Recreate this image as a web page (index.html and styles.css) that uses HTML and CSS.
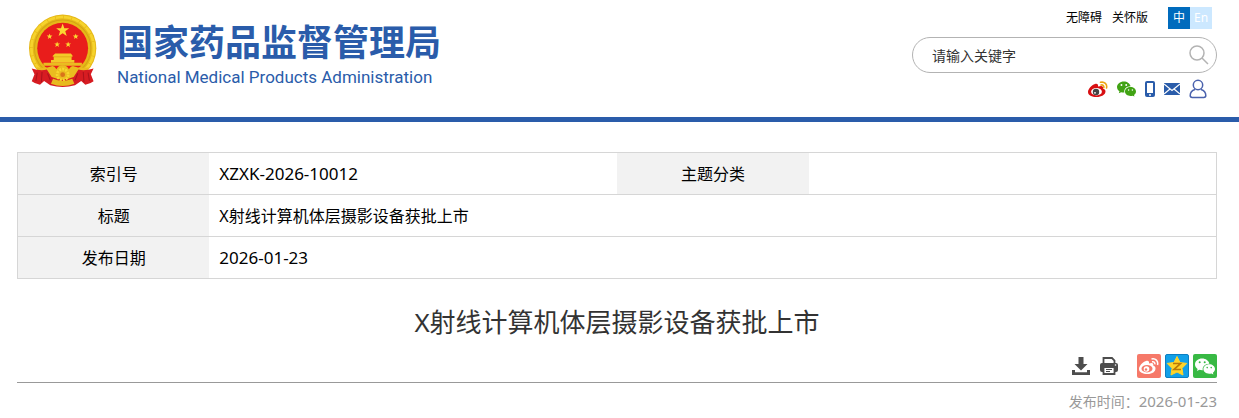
FILE: index.html
```html
<!DOCTYPE html>
<html lang="zh-CN">
<head>
    <meta charset="UTF-8">
    <meta name="viewport" content="width=device-width, initial-scale=1.0">
    <title>X射线计算机体层摄影设备获批上市</title>
    <link rel="stylesheet" href="styles.css">
</head>
<body>
    <!-- 图标定义 -->
    <svg class="icon-defs" aria-hidden="true">
        <symbol id="star" viewBox="-10 -10 20 20">
            <path d="M0-10 2.4-3.2 9.5-3.1 3.8 1.2 5.9 8.1 0 4-5.9 8.1-3.8 1.2-9.5-3.1-2.4-3.2z"/>
        </symbol>
        <symbol id="wechat" viewBox="0 0 20 16">
            <path fill-rule="evenodd" d="M7.2 0C3.2 0 0 2.6 0 5.9c0 1.8 1 3.4 2.6 4.5l-.7 2.2 2.5-1.3c.9.3 1.8.4 2.8.4h.6c-.8-3.6 2.4-6.7 6.6-6.5C13.7 2.2 10.7 0 7.2 0zM4.7 2.8a1 1 0 1 1 0 2 1 1 0 0 1 0-2zm5 0a1 1 0 1 1 0 2 1 1 0 0 1 0-2z"/>
            <path fill-rule="evenodd" d="M14.2 5.8c3.2 0 5.8 2.1 5.8 4.8 0 1.5-.8 2.8-2.1 3.7l.5 1.7-2-1c-.7.2-1.400.3-2.200.3-3.200 0-5.800-2.100-5.800-4.700s2.600-4.800 5.800-4.800zm-2 2.500a.8.8 0 1 0 0 1.600.8.8 0 0 0 0-1.600zm4 0a.8.8 0 1 0 0 1.600.8.8 0 0 0 0-1.600z"/>
        </symbol>
    </svg>

    <header class="header">
        <div class="container header-inner">
            <a href="#" class="logo">
                <svg class="emblem" viewBox="0 0 198 214" aria-hidden="true">
                    <!-- 麦穗外环 -->
                    <circle cx="98" cy="99" r="98" fill="#e6b818"/>
                    <circle cx="98" cy="99" r="91" fill="none" stroke="#f6d32c" stroke-width="8" stroke-dasharray="22 2"/>
                    <circle cx="98" cy="99" r="82" fill="none" stroke="#d3a514" stroke-width="3"/>
                    <circle cx="98" cy="99" r="74" fill="#e91d1b"/>
                    <!-- 五星 -->
                    <g fill="#fbd831">
                        <use href="#star" x="78" y="27" width="40" height="40"/>
                        <use href="#star" x="51" y="56" width="18" height="18"/>
                        <use href="#star" x="127" y="56" width="18" height="18"/>
                        <use href="#star" x="73" y="79" width="18" height="18"/>
                        <use href="#star" x="105" y="79" width="18" height="18"/>
                    </g>
                    <!-- 天安门 -->
                    <path d="M76 114h46l6 8-4 2v9h8v8H64v-8h8v-9l-4-2z" fill="#f3c928"/>
                    <path d="M72 124h52" stroke="#d99c12" stroke-width="2"/>
                    <path d="M42 141h112v9H42z" fill="#eabc20"/>
                    <!-- 绶带与齿轮 -->
                    <path d="M22 154q26 4 42-2 8-4 16 8a20 20 0 0 1 36 0q8-12 16-8 16 6 42 2l-20 34q-56 20-112 0z" fill="#eabc20"/>
                    <path d="M8 158q26 8 44 3l14 22q32 14 64 0l14-22q18 5 44-3l-8 17 8 20q-10 8-24 10l-12-11-18 13q-36 10-72 0l-18-13-12 11q-14-2-24-10l8-20z" fill="#d71c22"/>
                    <circle cx="98" cy="176" r="14" fill="#eabc20"/>
                    <circle cx="98" cy="176" r="16" fill="none" stroke="#f8d62e" stroke-width="8" stroke-dasharray="6 3"/>
                    <circle cx="98" cy="176" r="7" fill="#d9731a"/>
                    <path d="M70 188q28 12 56 0l6 14q-34 14-68 0z" fill="#e8ba1e"/>
                    <path d="M24 170l-4 24M38 168l-2 30M172 170l4 24M158 168l2 30M54 172l8 20M142 172l-8 20" fill="none" stroke="#ad121c" stroke-width="3"/>
                </svg>
                <span class="logo-text">
                    <span class="logo-cn">国家药品监督管理局</span>
                    <span class="logo-en">National Medical Products Administration</span>
                </span>
            </a>

            <div class="header-tools">
                <div class="top-links">
                    <a href="#">无障碍</a>
                    <a href="#">关怀版</a>
                    <span class="lang">
                        <a href="#" class="lang-item active">中</a><a href="#" class="lang-item">En</a>
                    </span>
                </div>
                <form class="search">
                    <input type="text" class="search-input" placeholder="请输入关键字" aria-label="请输入关键字">
                    <button type="button" class="search-btn" aria-label="搜索">
                        <svg width="20" height="20" viewBox="0 0 20 20" fill="none" stroke="#b3b3b3" stroke-width="1.5">
                            <circle cx="8" cy="8" r="7"/>
                            <path d="M13 13l6 6"/>
                        </svg>
                    </button>
                </form>
                <div class="social">
                    <a href="#" aria-label="微博">
                        <svg width="20" height="18" viewBox="0 0 20 18">
                            <path d="M7 4C3.5 5 0 9 0 12c0 3.4 4 5 8.5 5 5 0 9-2.500 9-5.500 0-1.700-1.300-2.600-2.600-3 .7-2.200-.9-3.400-4.900-1.900C10.400 4.300 9.300 3.400 7 4z" fill="#d80f12"/>
                            <ellipse cx="8.5" cy="11.7" rx="5.4" ry="3.700" fill="#fff"/>
                            <circle cx="8" cy="12" r="3.200" fill="#444"/>
                            <circle cx="7" cy="12.800" r=".9" fill="#fff"/>
                            <path d="M12.500 2.300c4-1 7 2 6 5.700M13 5c2-.4 3.200.9 2.800 2.600" fill="none" stroke="#eda516" stroke-width="1.600" stroke-linecap="round"/>
                        </svg>
                    </a>
                    <a href="#" aria-label="微信">
                        <svg width="19" height="16" fill="#41a314"><use href="#wechat"/></svg>
                    </a>
                    <a href="#" aria-label="手机">
                        <svg width="10" height="16" viewBox="0 0 10 16">
                            <rect width="10" height="16" rx="2" fill="#2a5caa"/>
                            <path d="M2 2h6v10H2z" fill="#fff"/>
                            <circle cx="5" cy="14" r="1" fill="#fff"/>
                        </svg>
                    </a>
                    <a href="#" aria-label="邮箱">
                        <svg width="16" height="12" viewBox="0 0 16 12">
                            <path d="M0 0h16v12H0z" fill="#2a5caa"/>
                            <path d="M0 1l8 6.500L16 1M0 11l6-5M16 11l-6-5" fill="none" stroke="#fff" stroke-width="1.200"/>
                        </svg>
                    </a>
                    <a href="#" aria-label="个人中心">
                        <svg width="18" height="20" viewBox="0 0 18 20" fill="none" stroke="#4a62ad" stroke-width="1.5">
                            <circle cx="9" cy="6" r="4.700"/>
                            <path d="M6 10.500C3 11.500 1.200 14 1.200 16.500c0 1.200.8 1.900 2 1.900h11.600c1.200 0 2-.7 2-1.900 0-2.500-1.800-5-4.800-6"/>
                        </svg>
                    </a>
                </div>
            </div>
        </div>
    </header>

    <main class="container">
        <!-- 文件信息 -->
        <table class="info-table">
            <tr>
                <th scope="row">索引号</th>
                <td class="num">XZXK-2026-10012</td>
                <th scope="row">主题分类</th>
                <td></td>
            </tr>
            <tr>
                <th scope="row">标题</th>
                <td colspan="3">X射线计算机体层摄影设备获批上市</td>
            </tr>
            <tr>
                <th scope="row">发布日期</th>
                <td colspan="3" class="num">2026-01-23</td>
            </tr>
        </table>

        <h1 class="title">X射线计算机体层摄影设备获批上市</h1>

        <div class="toolbar">
            <button type="button" class="tool" aria-label="下载">
                <svg width="20" height="20" viewBox="0 0 20 20" fill="#4d4d4d">
                    <path d="M7.500 1h5v7h4L10 14.500 3.500 8h4z"/>
                    <path d="M1 14h3v2.200h12V14h3v5H1z"/>
                </svg>
            </button>
            <button type="button" class="tool" aria-label="打印">
                <svg width="20" height="20" viewBox="0 0 20 20">
                    <path d="M4.500 7V2h8.500l2.500 2.500V7" fill="#fff" stroke="#4d4d4d" stroke-width="1.800"/>
                    <rect x="1" y="7" width="18" height="9" rx="2" fill="#4d4d4d"/>
                    <path d="M4.500 11h11v7h-11z" fill="#fff" stroke="#4d4d4d" stroke-width="1.800"/>
                    <path d="M7 13.500h6M7 15.500h4" stroke="#4d4d4d"/>
                    <circle cx="16.500" cy="9" r=".8" fill="#fff"/>
                </svg>
            </button>
            <div class="share">
                <a href="#" class="share-item weibo" aria-label="分享到微博">
                    <svg width="20" height="18" viewBox="0 0 20 18">
                        <path d="M7 4C3.500 5 0 9 0 12c0 3.400 4 5 8.500 5 5 0 8-2.500 8-5.500 0-1.700-1-2.600-2.300-3 .6-2.200-.9-3.100-4.200-1.900C10.400 4.300 9.300 3.400 7 4z" fill="#fff"/>
                        <ellipse cx="8" cy="11.700" rx="5.500" ry="3.700" fill="#f67969"/>
                        <circle cx="7.500" cy="12" r="2.800" fill="#fff"/>
                        <circle cx="7" cy="12.500" r="1.200" fill="#f67969"/>
                        <path d="M12.500 2c4-1 7 2 6 6M13 4.800c2-.4 3.200.9 2.800 2.600" fill="none" stroke="#fff" stroke-width="1.500"/>
                    </svg>
                </a>
                <a href="#" class="share-item qzone" aria-label="分享到QQ空间">
                    <svg width="22" height="22" viewBox="-11 -11 22 22">
                        <path d="M0-9.500 3-3.500 9.800-2.600 5 2.300 6 9 0 6-6 9-5 2.300-9.800-2.600-3-3.500z" fill="#ffd42a" stroke="#ffd42a" stroke-linejoin="round"/>
                        <path d="M-4-2.500h7.500L-3 3.500H4" fill="none" stroke="#b97806" stroke-width="1.700"/>
                    </svg>
                </a>
                <a href="#" class="share-item weixin" aria-label="分享到微信">
                    <svg width="20" height="17" fill="#fff"><use href="#wechat"/></svg>
                </a>
            </div>
        </div>

        <p class="publish">发布时间：<time class="publish-date" datetime="2026-01-23">2026-01-23</time></p>
    </main>
</body>
</html>
```
FILE: styles.css
```css
/* 基础样式 */
* {
    margin: 0;
    padding: 0;
    box-sizing: border-box;
}

body {
    font-family: "Noto Sans", "Noto Sans CJK SC", sans-serif;
    font-size: 16px;
    color: #000;
    background: #fff;
}

a {
    color: inherit;
    text-decoration: none;
}

svg {
    display: block;
}

button {
    border: none;
    background: none;
    cursor: pointer;
}

.icon-defs {
    display: none;
}

.container {
    padding: 0 22px 0 17px;
}

/* 页头 */
.header {
    border-bottom: 5px solid #2a5caa;
}

.header-inner {
    min-height: 117px;
    display: flex;
    justify-content: space-between;
    align-items: flex-start;
}

.logo {
    display: flex;
    gap: 20px;
    padding: 14px 0 0 12px;
    color: #2a5caa;
}

.emblem {
    width: 68px;
    height: 74px;
}

.logo-text {
    display: flex;
    flex-direction: column;
    white-space: nowrap;
}

.logo-cn {
    font-family: "Noto Sans CJK SC", sans-serif;
    font-size: 36px;
    font-weight: 700;
    line-height: 52px;
}

.logo-en {
    font-family: Roboto, sans-serif;
    font-size: 17px;
    line-height: 22px;
}

.header-tools {
    width: 305px;
    padding-top: 7px;
}

.top-links {
    display: flex;
    justify-content: flex-end;
    gap: 10px;
    padding-right: 5px;
    font-size: 12px;
    line-height: 22px;
}

.lang {
    display: flex;
    margin-left: 10px;
}

.lang-item {
    width: 22px;
    height: 22px;
    text-align: center;
    color: #fff;
    background: #cce8ff;
}

.lang-item.active {
    background: #006bbd;
}

.search {
    display: flex;
    align-items: center;
    height: 36px;
    margin-top: 8px;
    padding: 0 7px 0 19px;
    border: 1px solid #b3b3b3;
    border-radius: 18px;
}

.search-input {
    flex: 1;
    min-width: 0;
    border: none;
    outline: none;
    background: none;
    font-family: inherit;
    font-size: 14px;
}

.search-input::placeholder {
    color: #333;
    opacity: 1;
}

.social {
    display: flex;
    justify-content: flex-end;
    align-items: center;
    gap: 9px;
    height: 20px;
    margin-top: 6px;
    padding-right: 10px;
}

/* 信息表格 */
.info-table {
    width: 100%;
    margin-top: 30px;
    border-collapse: collapse;
    table-layout: fixed;
    border: 1px solid #d6d6d6;
}

.info-table tr {
    height: 42px;
    border-bottom: 1px solid #d6d6d6;
}

.info-table th {
    width: 16%;
    padding-bottom: 2px;
    font-weight: 400;
    background: #f2f2f2;
}

.info-table td {
    padding: 0 10px 2px;
}

.info-table .num {
    padding-bottom: 0;
    font-size: 17px;
}

/* 正文标题 */
.title {
    margin-top: 23px;
    font-size: 26px;
    font-weight: 400;
    line-height: 40px;
    text-align: center;
    color: #333;
}

.toolbar {
    display: flex;
    justify-content: flex-end;
    align-items: center;
    gap: 8px;
    margin-top: 12px;
    padding-bottom: 4px;
    border-bottom: 1px solid #999;
}

.share {
    display: flex;
    gap: 4px;
    margin-left: 10px;
}

.share-item {
    width: 24px;
    height: 24px;
    display: flex;
    align-items: center;
    justify-content: center;
    border-radius: 2px;
}

.weibo {
    background: #f67969;
}

.qzone {
    background: #12a0e8;
    border: 1px solid #0c7fc2;
}

.weixin {
    background: #38b944;
}

.publish {
    margin-top: 7px;
    font-size: 14px;
    line-height: 22px;
    text-align: right;
    color: #999;
}

.publish-date {
    font-size: 15px;
}
```
